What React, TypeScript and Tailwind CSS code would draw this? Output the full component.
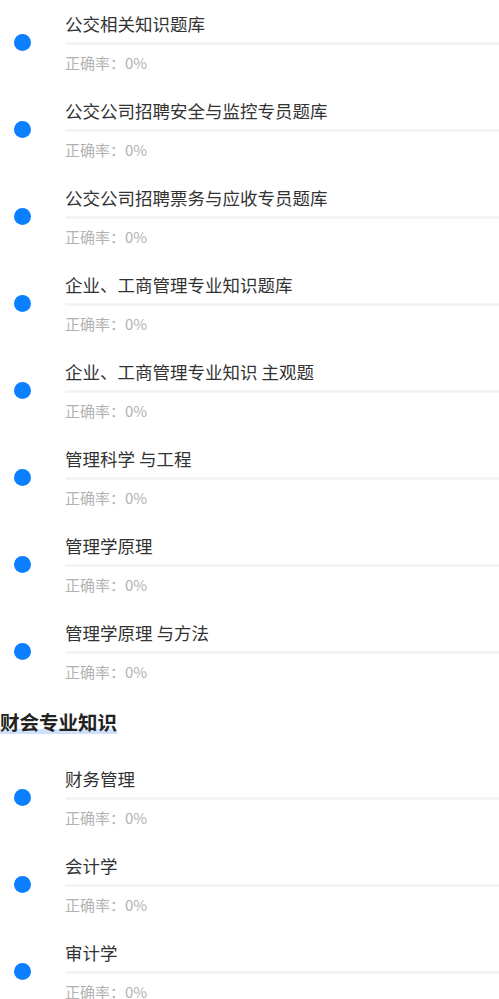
const groupA = [
  '公交相关知识题库',
  '公交公司招聘安全与监控专员题库',
  '公交公司招聘票务与应收专员题库',
  '企业、工商管理专业知识题库',
  '企业、工商管理专业知识 主观题',
  '管理科学 与工程',
  '管理学原理',
  '管理学原理 与方法',
];

const groupB = ['财务管理', '会计学', '审计学'];

function BankItem({ title }: { title: string }) {
  return (
    <div className="flex h-[87px] shrink-0">
      <div className="w-[65px] shrink-0 pl-[14px]">
        <div className="mt-[34px] h-[17px] w-[17px] rounded-full bg-[#0a7fff]" />
      </div>
      <div className="flex min-w-0 flex-1 flex-col pt-[12px]">
        <div className="truncate text-[17.5px] leading-[24px] text-[#333333]">{title}</div>
        <div className="mt-[6px] h-[3px] rounded-l-full bg-[#f4f4f4]" />
        <div className="mt-[8px] text-[15px] leading-[20px] text-[#b2b2b2]">正确率：0%</div>
      </div>
    </div>
  );
}

export default function App() {
  return (
    <div
      className="flex h-[999px] w-full flex-col overflow-hidden bg-white"
      style={{ fontFamily: '"Noto Sans CJK SC", "Noto Sans", sans-serif' }}
    >
      {groupA.map((t) => (
        <BankItem key={t} title={t} />
      ))}
      <div className="h-[59px] shrink-0 pt-[14px]">
        <span className="relative inline-block text-[19.5px] font-bold leading-[24px] text-[#222222]">
          <span className="absolute left-0 right-0 top-[19px] h-[5px] bg-[#cfe1fa]" />
          <span className="relative">财会专业知识</span>
        </span>
      </div>
      {groupB.map((t) => (
        <BankItem key={t} title={t} />
      ))}
    </div>
  );
}
